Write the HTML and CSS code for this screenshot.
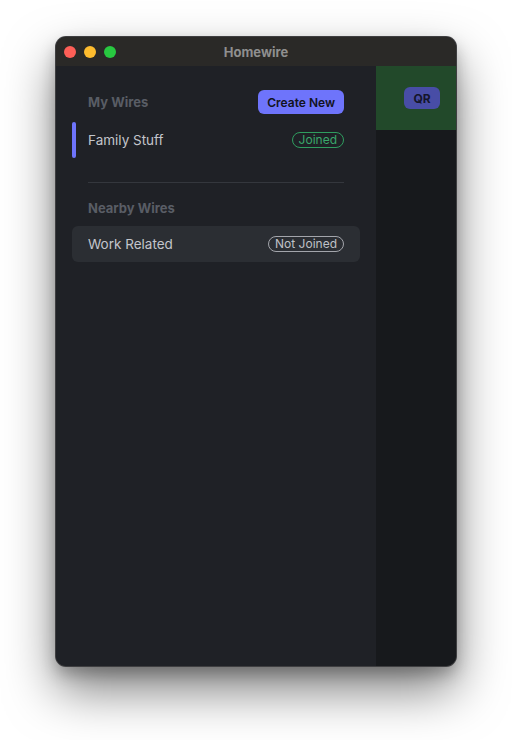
FILE: index.html
```html
<!DOCTYPE html>
<html>
<head>
<meta charset="utf-8">
<link rel="stylesheet" href="styles.css">
</head>
<body>
<div class="window">
  <div class="titlebar">
    <div class="lights">
      <span class="light red"></span>
      <span class="light yellow"></span>
      <span class="light green"></span>
    </div>
    <div class="title">Homewire</div>
  </div>
  <div class="content">
    <aside class="sidebar">
      <div class="section-head">
        <span class="section-title">My Wires</span>
        <button class="btn-create">Create New</button>
      </div>
      <div class="item active">
        <span class="item-name">Family Stuff</span>
        <span class="badge joined">Joined</span>
      </div>
      <div class="divider"></div>
      <div class="section-head plain">
        <span class="section-title">Nearby Wires</span>
      </div>
      <div class="item hover">
        <span class="item-name">Work Related</span>
        <span class="badge not-joined">Not Joined</span>
      </div>
    </aside>
    <main class="panel">
      <div class="panel-head">
        <button class="btn-qr">QR</button>
      </div>
    </main>
  </div>
</div>
</body>
</html>
```
FILE: styles.css
```css
* { box-sizing: border-box; }
html, body { margin: 0; background: #ffffff; }
body {
  min-height: 740px;
  padding: 37px 0 0 56px;
  font-family: Inter, "Noto Sans", sans-serif;
}
.window {
  width: 400px;
  height: 629px;
  border-radius: 10px;
  overflow: hidden;
  display: flex;
  flex-direction: column;
  background: #1f2126;
  box-shadow: 0 0 0 1px #3f3f41, 0 24px 50px rgba(0,0,0,0.5), 0 8px 16px rgba(0,0,0,0.25);
}
.titlebar {
  height: 29px;
  flex: none;
  background: #2a2927;
  display: flex;
  align-items: center;
  position: relative;
}
.lights {
  display: flex;
  gap: 8px;
  padding-left: 8px;
}
.light { width: 12px; height: 12px; border-radius: 50%; }
.red { background: #fe5f57; }
.yellow { background: #febc2e; }
.green { background: #28c840; }
.title {
  position: absolute;
  left: 0; right: 0;
  text-align: center;
  font-size: 13px;
  font-weight: 700;
  color: #8f8f8f;
}
.content { flex: 1; display: flex; }
.sidebar {
  width: 320px;
  flex: none;
  background: #1f2126;
  padding: 24px 16px;
  display: flex;
  flex-direction: column;
}
.section-head {
  height: 24px;
  padding: 0 16px;
  display: flex;
  align-items: center;
  justify-content: space-between;
}
.section-head.plain { height: 20px; }
.section-title {
  font-size: 13px;
  font-weight: 700;
  color: #595d65;
}
.btn-create {
  height: 24px;
  padding: 0 9px;
  border: none;
  border-radius: 6px;
  background: #6e74fb;
  color: #121320;
  font-family: inherit;
  font-size: 12px;
  font-weight: 600;
}
.item {
  position: relative;
  height: 36px;
  margin-top: 8px;
  padding: 0 16px;
  display: flex;
  align-items: center;
  justify-content: space-between;
  border-radius: 6px;
}
.item.active::before {
  content: "";
  position: absolute;
  left: 0; top: 0; bottom: 0;
  width: 4px;
  border-radius: 2px;
  background: #6e74fb;
}
.item.hover { background: #2b2e33; }
.item-name {
  font-size: 13.5px;
  color: #c3c5cb;
}
.badge {
  height: 16px;
  padding: 0 6px;
  border-radius: 8px;
  font-size: 12px;
  line-height: 14px;
  display: flex;
  align-items: center;
}
.joined { border: 1px solid #2f9d5f; color: #3aa86b; }
.not-joined { border: 1px solid #a3a5ab; color: #bfc1c7; }
.divider {
  height: 1px;
  background: #34373d;
  margin: 24px 16px 15px;
}
.panel {
  flex: 1;
  background: #17191c;
}
.panel-head {
  height: 64px;
  background: #22492a;
  display: flex;
  align-items: center;
  justify-content: flex-end;
  padding-right: 16px;
}
.btn-qr {
  width: 36px;
  height: 22px;
  border: none;
  border-radius: 6px;
  background: #484da6;
  color: #14152b;
  font-family: inherit;
  font-size: 12px;
  font-weight: 700;
  padding: 0;
}
```
